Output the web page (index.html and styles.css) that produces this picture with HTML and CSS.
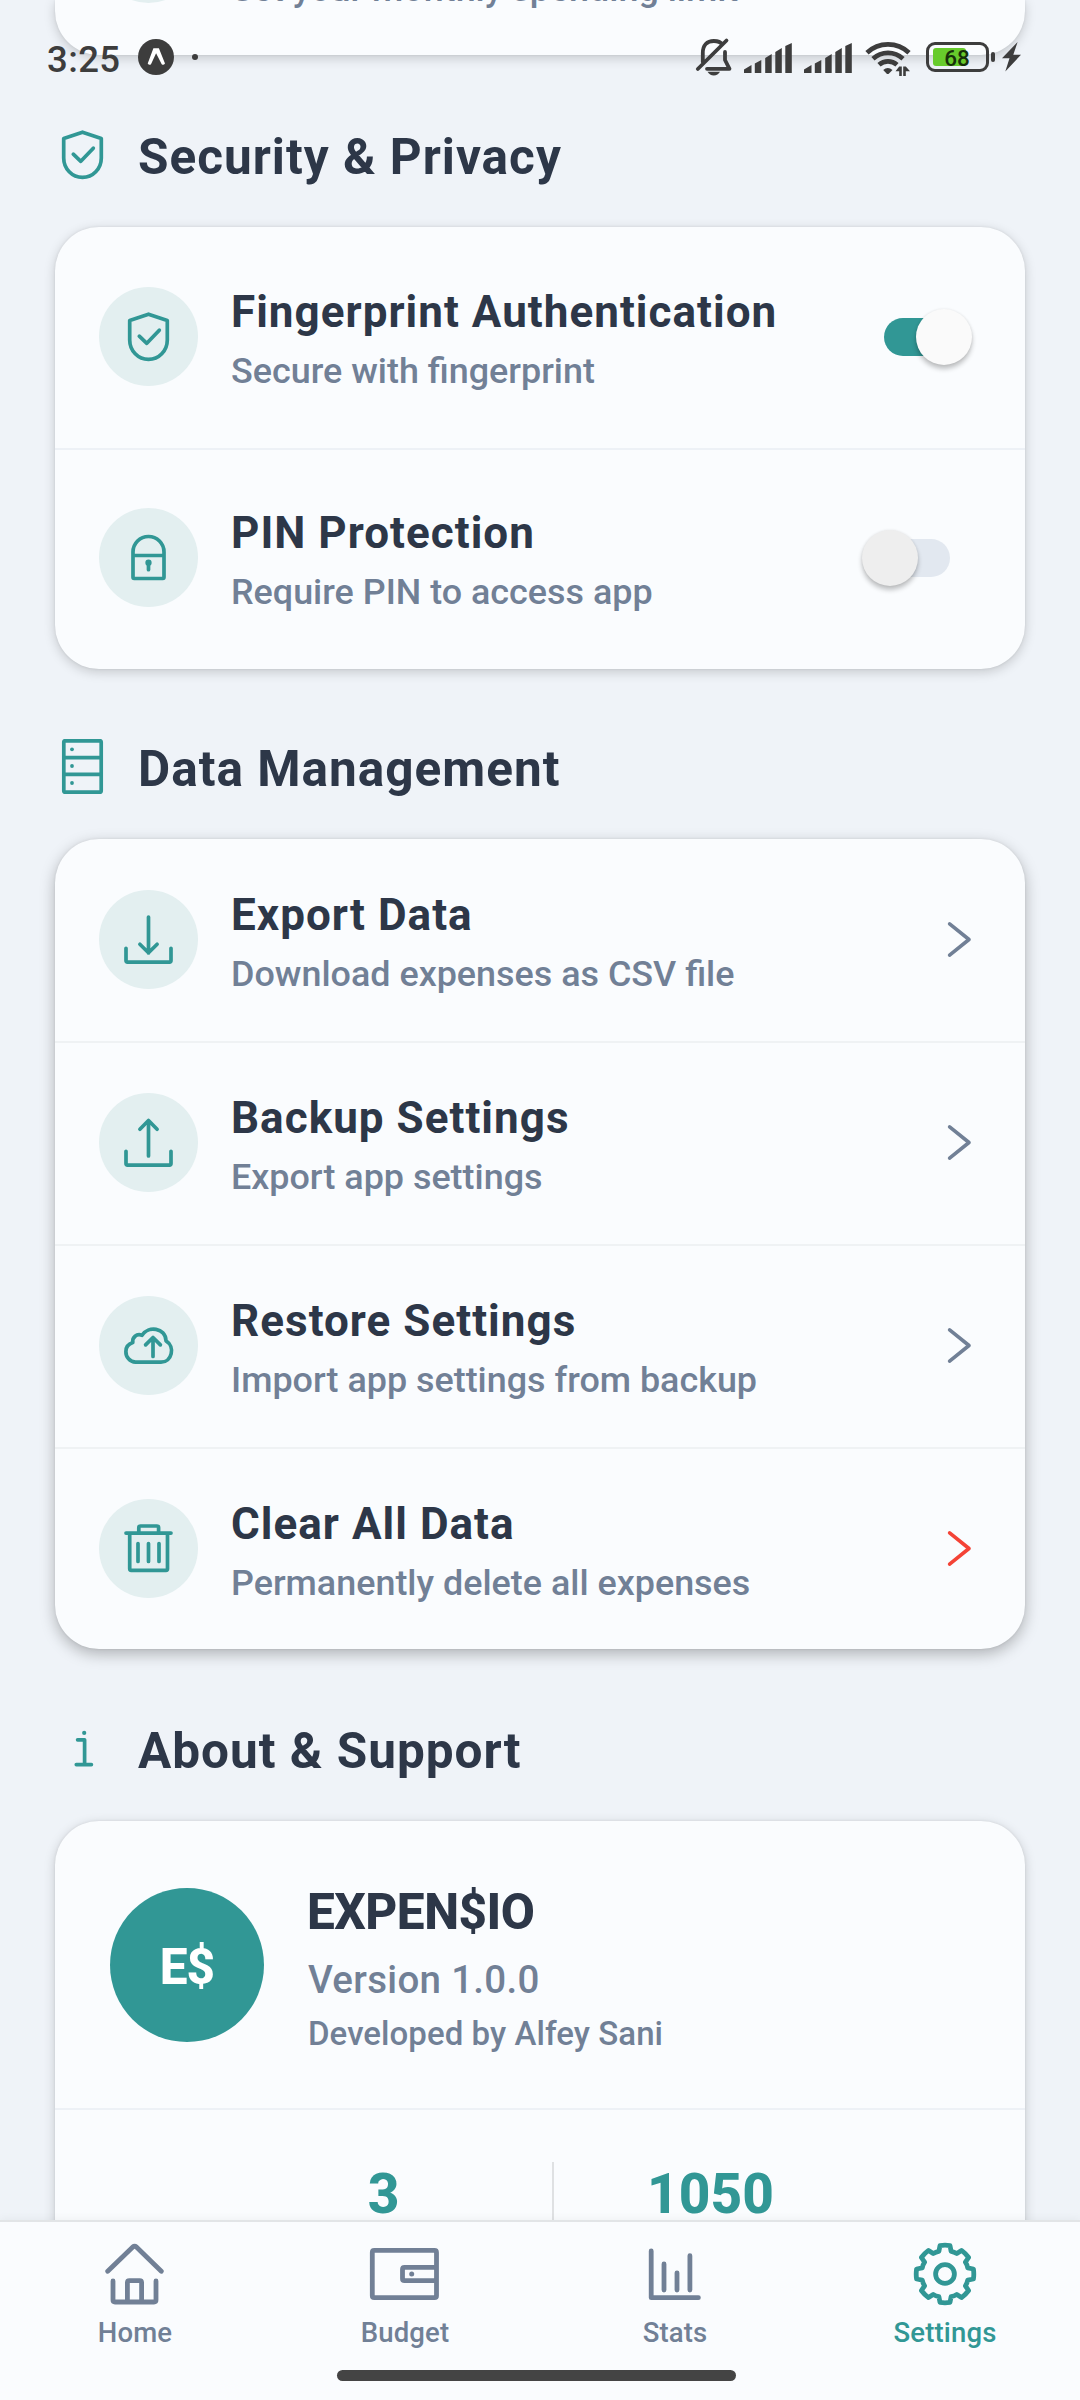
FILE: index.html
```html
<!DOCTYPE html>
<html lang="en">
<head>
<meta charset="utf-8">
<title>Settings</title>
<link rel="stylesheet" href="styles.css">
</head>
<body>
<svg class="defs" aria-hidden="true">
  <symbol id="shield" viewBox="0 0 55 55"><path d="M27.5 5.2 46.3 11.4V31a18.8 19.4 0 0 1-37.6 0V11.4Z"/><path d="M18.3 27.2 25.8 34.3 38.3 21.2"/></symbol>
  <symbol id="lock" viewBox="0 0 55 55"><path d="M12 26V22a15.5 15.5 0 0 1 31 0V26M12 25.5H43V47.3Q43 48.5 41.8 48.5H13.2Q12 48.5 12 47.3Z"/><path d="M27.5 33V39.7"/><circle cx="27.5" cy="32.7" r="1.3"/></symbol>
  <symbol id="database" viewBox="0 0 55 55"><rect x="8.8" y="1.8" width="37.4" height="51.4" rx="1.5"/><path d="M8.8 18.6H46.2M8.8 35.4H46.2"/><g class="solid"><circle cx="17" cy="10.3" r="1.9"/><circle cx="17" cy="27" r="1.9"/><circle cx="17" cy="44" r="1.9"/></g></symbol>
  <symbol id="tray-down" viewBox="0 0 55 55"><path d="M27.5 5V41M18.9 32.3 27.5 40.8 36.1 32.3M5 36.3V48.6Q5 50.2 6.6 50.2H48.4Q50 50.2 50 48.6V36.3"/></symbol>
  <symbol id="tray-up" viewBox="0 0 55 55"><path d="M27.5 41V5.5M18.9 14.2 27.5 5.5 36.1 14.2M5 36.3V48.6Q5 50.2 6.6 50.2H48.4Q50 50.2 50 48.6V36.3"/></symbol>
  <symbol id="cloud-up" viewBox="0 0 55 55"><path d="M14.5 44.2A10.3 10.3 0 0 1 4.9 33.5C4.9 29.5 7.6 26 11.8 24.6C11 19.5 15.5 15.2 21 17.3C27 7.6 44.5 9.3 45 22.8C54.5 28.5 51 44.2 40 44.2Z"/><path d="M32 38.5V19.5M24.6 26.9 32 19.5 39.4 26.9"/></symbol>
  <symbol id="trash" viewBox="0 0 55 55"><path d="M5 12.1H50M8.7 12.1V47.8Q8.7 49.3 10.2 49.3H45Q46.5 49.3 46.5 47.8V12.1M17.8 11V6.6Q17.8 5 19.4 5H36Q37.6 5 37.6 6.6V11M17 22.5V40.5M27.5 22.5V40.5M38 22.5V40.5"/></symbol>
  <symbol id="info" viewBox="0 0 55 55"><path d="M22.6 18.8H29.6V43.6M21.3 43.6H36.4"/><circle class="solid" cx="29.2" cy="11.9" r="2.1"/></symbol>
  <symbol id="chevron" viewBox="0 0 55 55"><path d="M28.6 11.8 48 27.5 28.6 43.2"/></symbol>
  <symbol id="signal" viewBox="0 0 48 30"><path d="M0 30V26.5L7.5 22V30ZM10.8 30V20.5L17.3 17V30ZM21.2 30V15L27.7 11V30ZM31.3 30V9L37.8 5V30ZM41.3 30V3L47.8 0V30Z"/></symbol>
</svg>

<main class="screen">
  <section class="card card-peek">
    <div class="badge"></div>
    <p class="row-sub">Set your monthly spending limit</p>
  </section>

  <header class="section-head">
    <svg class="icon"><use href="#shield"/></svg>
    <h2>Security &amp; Privacy</h2>
  </header>
  <section class="card card-security">
    <div class="row">
      <div class="badge"><svg class="icon"><use href="#shield"/></svg></div>
      <div class="row-text"><h3>Fingerprint Authentication</h3><p class="row-sub">Secure with fingerprint</p></div>
      <div class="switch switch-on"><span class="thumb"></span></div>
    </div>
    <div class="row">
      <div class="badge"><svg class="icon"><use href="#lock"/></svg></div>
      <div class="row-text"><h3>PIN Protection</h3><p class="row-sub">Require PIN to access app</p></div>
      <div class="switch switch-off"><span class="thumb"></span></div>
    </div>
  </section>

  <header class="section-head section-head-tight">
    <svg class="icon"><use href="#database"/></svg>
    <h2>Data Management</h2>
  </header>
  <section class="card card-data">
    <div class="row">
      <div class="badge"><svg class="icon"><use href="#tray-down"/></svg></div>
      <div class="row-text"><h3>Export Data</h3><p class="row-sub">Download expenses as CSV file</p></div>
      <svg class="icon chevron"><use href="#chevron"/></svg>
    </div>
    <div class="row">
      <div class="badge"><svg class="icon"><use href="#tray-up"/></svg></div>
      <div class="row-text"><h3>Backup Settings</h3><p class="row-sub">Export app settings</p></div>
      <svg class="icon chevron"><use href="#chevron"/></svg>
    </div>
    <div class="row">
      <div class="badge"><svg class="icon"><use href="#cloud-up"/></svg></div>
      <div class="row-text"><h3>Restore Settings</h3><p class="row-sub">Import app settings from backup</p></div>
      <svg class="icon chevron"><use href="#chevron"/></svg>
    </div>
    <div class="row">
      <div class="badge"><svg class="icon"><use href="#trash"/></svg></div>
      <div class="row-text"><h3>Clear All Data</h3><p class="row-sub">Permanently delete all expenses</p></div>
      <svg class="icon chevron danger"><use href="#chevron"/></svg>
    </div>
  </section>

  <header class="section-head">
    <svg class="icon"><use href="#info"/></svg>
    <h2>About &amp; Support</h2>
  </header>
  <section class="card card-about">
    <div class="about">
      <div class="logo">E$</div>
      <div class="about-text">
        <h3 class="app-name">EXPEN$IO</h3>
        <p class="version">Version 1.0.0</p>
        <p class="author">Developed by Alfey Sani</p>
      </div>
    </div>
    <div class="stats">
      <div class="stat">3</div>
      <div class="stat-divider"></div>
      <div class="stat">1050</div>
    </div>
  </section>
</main>

<nav class="tabs">
  <a class="tab"><svg class="tab-icon" viewBox="0 0 66 66"><path d="M5.7 30.3 30.8 6Q32.6 4.6 34.4 6L59.3 30.3M11 40V59Q11 61 13 61H52Q54 61 54 59V40M25.4 60V41.6Q25.4 39.6 27.4 39.6H37.6Q39.6 39.6 39.6 41.6V60"/></svg>Home</a>
  <a class="tab"><svg class="tab-icon" viewBox="0 0 66 66"><path d="M2.3 9.4H62.5Q64.5 9.4 64.5 11.4V54.7Q64.5 56.7 62.5 56.7H2.3Q.3 56.7 .3 54.7V11.4Q.3 9.4 2.3 9.4ZM64 26.3H32.5Q30.5 26.3 30.5 28.3V37.7Q30.5 39.7 32.5 39.7H64"/><circle class="solid" cx="39.7" cy="33" r="2.5"/></svg>Budget</a>
  <a class="tab"><svg class="tab-icon" viewBox="0 0 66 66"><path d="M9.2 10V56.7H56.4M22 23V49M35 31.8V49M47.9 14.7V49"/></svg>Stats</a>
  <a class="tab tab-active"><svg class="tab-icon" viewBox="-33 -33 66 66"><path d="M-5-28.4Q0-29.2 5-28.4L6.1-22.7Q9.2-22.2 11.8-20.4L16.5-23.6Q20.6-20.6 23.6-16.5L20.4-11.8Q22.2-9.2 22.7-6.1L28.4-5Q29.2 0 28.4 5L22.7 6.1Q22.2 9.2 20.4 11.8L23.6 16.5Q20.6 20.6 16.5 23.6L11.8 20.4Q9.2 22.2 6.1 22.7L5 28.4Q0 29.2-5 28.4L-6.1 22.7Q-9.2 22.2-11.8 20.4L-16.5 23.6Q-20.6 20.6-23.6 16.5L-20.4 11.8Q-22.2 9.2-22.7 6.1L-28.4 5Q-29.2 0-28.4-5L-22.7-6.1Q-22.2-9.2-20.4-11.8L-23.6-16.5Q-20.6-20.6-16.5-23.6L-11.8-20.4Q-9.2-22.2-6.1-22.7Z"/><circle r="9.4"/></svg>Settings</a>
</nav>
<div class="home-indicator"></div>

<div class="status">
  <span class="clock">3:25</span>
  <svg class="expo" viewBox="0 0 36 36"><circle cx="18" cy="18" r="18"/><path class="expo-mark" d="M15.4 9.3H20.9L27 24.4Q25.5 26.8 23.7 25.2L18.1 14.2L13 25.2Q11.2 26.8 9.7 24.6Z"/></svg>
  <span class="more-dot"></span>
  <svg class="bell" viewBox="0 0 36 38"><path class="line" d="M6.8 24V15C6.8 7 11 3 17.8 3C22 3 25 4.5 26.3 6.5M1.8 31 30.5 2.5M11 30.8H33.5L29 22V14"/><path d="M11.5 33.8H24Q22 37.5 17.8 37.5T11.5 33.8Z"/></svg>
  <svg class="signal"><use href="#signal"/></svg>
  <svg class="signal signal-second"><use href="#signal"/></svg>
  <svg class="wifi" viewBox="0 0 46 35"><path class="arc" d="M2 11.8A30.5 30.5 0 0 1 44 11.8M8 17.8A22 22 0 0 1 38 17.8M14 23.8A13.5 13.5 0 0 1 32 23.8"/><path d="M18.2 29Q22.8 25 27.5 29L23.5 33H22ZM30.5 30.2 34.2 25.5H36.8V35H34.2V30.2ZM38.2 25.5H40.8L45 30.2H40.8V35H38.2Z"/></svg>
  <div class="battery"><span class="battery-level"></span><span class="battery-text">68</span></div>
  <svg class="bolt" viewBox="0 0 19 30"><path d="M15.6 0 0 16.2H7.5L3.3 29.5 19 12.8H11.3Z"/></svg>
</div>
</body>
</html>
```
FILE: styles.css
```css
* { box-sizing: border-box; margin: 0; padding: 0; }

body {
  position: relative;
  width: 1080px;
  height: 2400px;
  overflow: hidden;
  display: flex;
  flex-direction: column;
  background: #eff3f8;
  font-family: Roboto, sans-serif;
  font-weight: 500;
  color: #2d3748;
}

.defs { position: absolute; width: 0; height: 0; }

svg { display: block; flex: none; overflow: visible; }

.icon {
  width: 55px;
  height: 55px;
  fill: none;
  stroke: #319795;
  stroke-width: 3.7;
  stroke-linecap: round;
  stroke-linejoin: round;
}

.solid { fill: currentColor; stroke: none; color: #319795; }

.screen { flex: 1; min-height: 0; overflow: hidden; padding: 0 55px; }

.card {
  background: #fafcfe;
  border-radius: 44px;
  box-shadow: 0 3px 12px rgba(0, 0, 0, .18), 0 0 3px rgba(0, 0, 0, .08);
}

.card-peek {
  height: 55px;
  border-radius: 0 0 44px 44px;
  padding: 0 44px 52px;
  display: flex;
  align-items: flex-end;
  gap: 33px;
}
.card-peek .row-sub { margin-bottom: -7px; }

.section-head {
  height: 172px;
  padding-bottom: 41px;
  display: flex;
  align-items: flex-end;
  gap: 28px;
}
.section-head-tight { height: 170px; }
.section-head .icon { margin-bottom: 4px; }

h2 {
  font-size: 49.5px;
  line-height: 58px;
  font-weight: 700;
  letter-spacing: 1px;
}

.row {
  display: flex;
  align-items: flex-start;
  padding: 50px 44px 0;
  height: 203px;
  border-bottom: 2px solid #edf1f6;
}
.row:last-child { border-bottom: 0; }

.card-security { height: 442px; padding-top: 2px; }
.card-security .row { height: 221px; padding-top: 58px; }
.card-data {
  height: 810px;
  padding-top: 1px;
  box-shadow: 0 5px 15px rgba(0, 0, 0, .27), 0 0 3px rgba(0, 0, 0, .08);
}
.card-data .row { border-color: #eff2f4; }

.badge {
  flex: none;
  width: 99px;
  height: 99px;
  border-radius: 50%;
  background: #e3eff0;
  display: flex;
  align-items: center;
  justify-content: center;
}

.row-text { flex: 1; padding-left: 33px; margin-top: -1px; }

h3 {
  font-size: 44px;
  line-height: 52px;
  font-weight: 700;
  letter-spacing: 1.03px;
}

.row-sub {
  font-size: 35.9px;
  line-height: 42px;
  margin-top: 12px;
  color: #718096;
  white-space: nowrap;
}

.chevron { margin: 22px 5px 0 0; stroke: #718096; stroke-width: 3.6; }
.danger { stroke: #f44336; }

.switch {
  position: relative;
  width: 75px;
  height: 38px;
  border-radius: 19px;
  margin-top: 31px;
}
.switch-on { background: #319795; margin-right: 22px; }
.switch-off { background: #e2e8f0; margin-right: 31px; }
.thumb {
  position: absolute;
  top: -9px;
  width: 56px;
  height: 56px;
  border-radius: 50%;
  background: #fafafa;
  box-shadow: 0 4px 5px rgba(0, 0, 0, .24), 0 0 3px rgba(0, 0, 0, .08);
}
.switch-on .thumb { right: -13px; }
.switch-off .thumb { left: -13px; background: #eee; }

.card-about { height: 700px; }
.about {
  display: flex;
  align-items: flex-start;
  gap: 44px;
  height: 289px;
  padding: 67px 55px 0;
  border-bottom: 2px solid #edf1f6;
}
.logo {
  flex: none;
  width: 154px;
  height: 154px;
  border-radius: 50%;
  background: #319795;
  color: #fff;
  font-size: 49.5px;
  font-weight: 800;
  letter-spacing: -1px;
  padding-top: 3px;
  display: flex;
  align-items: center;
  justify-content: center;
}
.app-name {
  font-size: 49.5px;
  line-height: 58px;
  font-weight: 800;
  letter-spacing: -.5px;
  margin: -5px 0 0 -1px;
}
.version {
  font-size: 38.5px;
  line-height: 46px;
  letter-spacing: .3px;
  color: #718096;
  margin-top: 16px;
}
.author {
  font-size: 33px;
  line-height: 38px;
  letter-spacing: .06px;
  color: #718096;
  margin-top: 12px;
}
.stats {
  display: grid;
  grid-template-columns: 337px 2px 313px;
  justify-content: center;
  padding: 52px 0 0 2px;
}
.stat {
  text-align: center;
  font-size: 55px;
  line-height: 64px;
  font-weight: 800;
  color: #319795;
}
.stat-divider { background: #dfe1e3; height: 110px; }

.tabs {
  position: relative;
  height: 180px;
  flex: none;
  display: grid;
  grid-template-columns: repeat(4, 1fr);
  background: #fafcfe;
  border-top: 2px solid #e2e5e7;
  box-shadow: 0 -2px 8px rgba(0, 0, 0, .04);
}
.tab {
  display: flex;
  flex-direction: column;
  align-items: center;
  padding-top: 19px;
  font-size: 27.5px;
  line-height: 32px;
  letter-spacing: .15px;
  color: #718096;
}
.tab-icon {
  width: 66px;
  height: 66px;
  margin-bottom: 10px;
  fill: none;
  stroke: currentColor;
  stroke-width: 4.8;
  stroke-linecap: round;
  stroke-linejoin: round;
}
.tab-icon .solid { color: inherit; }
.tab-active { color: #319795; }

.home-indicator {
  position: absolute;
  left: 337px;
  bottom: 19px;
  width: 399px;
  height: 11px;
  border-radius: 6px;
  background: #444;
}

/* System bar drawn over the scrolled content */
.status {
  position: absolute;
  top: 38px;
  left: 47px;
  right: 59px;
  height: 40px;
  display: flex;
  align-items: flex-start;
  fill: #3d3d3d;
  color: #3d3d3d;
}
.clock {
  width: 91px;
  font-size: 36.5px;
  line-height: 43px;
  font-weight: 500;
  letter-spacing: .4px;
}
.expo { width: 36px; height: 36px; margin-top: 1px; }
.expo-mark { fill: #fff; }
.more-dot {
  width: 6px;
  height: 6px;
  border-radius: 50%;
  background: #3d3d3d;
  margin: 16px auto 0 18px;
}
.bell { width: 36px; height: 38px; margin-right: 12px; }
.line {
  fill: none;
  stroke: #3d3d3d;
  stroke-width: 3.8;
  stroke-linecap: round;
  stroke-linejoin: round;
}
.signal { width: 48px; height: 30px; margin-top: 5px; }
.signal-second { margin: 5px 13px 0 12px; }
.wifi { width: 46px; height: 35px; margin: 3px 15px 0 0; }
.arc { fill: none; stroke: #3d3d3d; stroke-width: 4.7; }
.battery {
  position: relative;
  width: 63px;
  height: 30px;
  margin: 4px 13px 0 0;
  border: 3px solid #3d3d3d;
  border-radius: 9px;
  display: flex;
  align-items: center;
  justify-content: center;
}
.battery::after {
  content: "";
  position: absolute;
  right: -9px;
  top: 7px;
  width: 4px;
  height: 10px;
  border-radius: 2px;
  background: #3d3d3d;
}
.battery-level {
  position: absolute;
  left: 4px;
  top: 3px;
  width: 33px;
  height: 18px;
  border-radius: 3px;
  background: #67cb2c;
}
.battery-text {
  position: relative;
  font-size: 22.5px;
  line-height: 24px;
  font-weight: 500;
  color: #17300a;
  left: -.5px;
  top: 1px;
}
.bolt { width: 19px; height: 30px; margin-top: 4px; }
```
